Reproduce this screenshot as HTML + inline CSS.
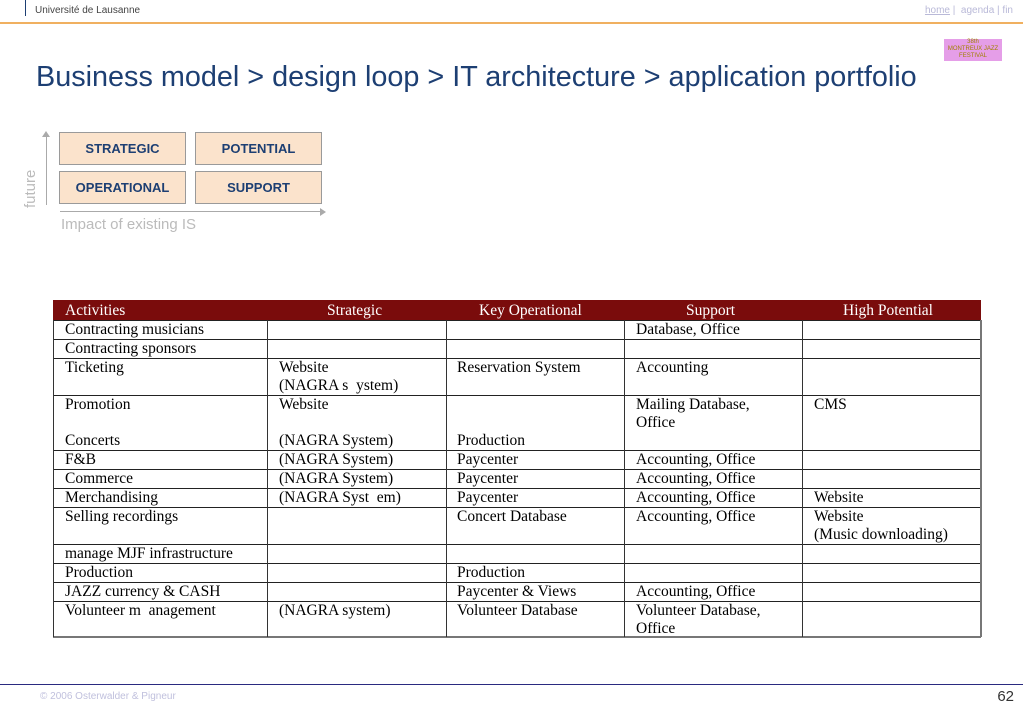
<!DOCTYPE html>
<html><head><meta charset="utf-8"><style>
body{margin:0;width:1023px;height:708px;position:relative;background:#fff;font-family:"Liberation Sans",sans-serif;overflow:hidden}
.a{position:absolute;white-space:nowrap}
.t{position:absolute;font-family:"Liberation Serif",serif;font-size:15.5px;color:#000;white-space:nowrap;line-height:18px}
.h{position:absolute;top:300px;height:20px;background:#7a0c0c}
.hl{position:absolute;height:1px;background:#222;left:53px;width:928px}
.vl{position:absolute;width:1px;background:#333;top:320px;height:317px}
.box{position:absolute;width:125px;height:31px;border:1px solid #9a9a9a;background:#fbe3cc;color:#1d3f73;font-weight:bold;font-size:13px;text-align:center;line-height:31px}
</style></head><body>
<div class="a" style="left:25px;top:0;width:1px;height:16px;background:#1d3f73"></div>
<div class="a" style="left:35px;top:5px;font-size:10px;color:#444">Université de Lausanne</div>
<div class="a" style="right:10px;top:5px;font-size:10px;color:#b9b9d8"><u>home</u> | &nbsp;agenda | fin</div>
<div class="a" style="left:0;top:22px;width:1023px;height:2px;background:#f0b060"></div>
<div class="a" style="left:944px;top:39px;width:58px;height:22px;background:#e59ee8;font-size:6px;color:#a08000;text-align:center;line-height:7px">38th<br>MONTREUX JAZZ<br>FESTIVAL</div>
<div class="a" style="left:36px;top:61px;font-size:28.8px;color:#1d3f73">Business model &gt; design loop &gt; IT architecture &gt; application portfolio</div>

<div class="a" style="left:46px;top:134px;width:1px;height:71px;background:#aaa"></div>
<div class="a" style="left:42px;top:131px;width:0;height:0;border-left:4px solid transparent;border-right:4px solid transparent;border-bottom:6px solid #aaa"></div>
<div class="a" style="left:60px;top:211px;width:262px;height:1px;background:#aaa"></div>
<div class="a" style="left:320px;top:208px;width:0;height:0;border-top:4px solid transparent;border-bottom:4px solid transparent;border-left:6px solid #aaa"></div>
<div class="a" style="left:22px;top:208px;transform:rotate(-90deg);transform-origin:left top;font-size:15px;color:#bbb">future</div>
<div class="a" style="left:61px;top:216px;font-size:15px;color:#bbb">Impact of existing IS</div>
<div class="box" style="left:59px;top:132px">STRATEGIC</div>
<div class="box" style="left:195px;top:132px">POTENTIAL</div>
<div class="box" style="left:59px;top:171px">OPERATIONAL</div>
<div class="box" style="left:195px;top:171px">SUPPORT</div>

<div class="h" style="left:53px;width:928px"></div>
<div class="t" style="left:65px;top:302px;color:#fff">Activities</div>
<div class="t" style="left:327px;top:302px;color:#fff">Strategic</div>
<div class="t" style="left:479px;top:302px;color:#fff">Key Operational</div>
<div class="t" style="left:686px;top:302px;color:#fff">Support</div>
<div class="t" style="left:843px;top:302px;color:#fff">High Potential</div>

<div class="hl" style="top:320px"></div><div class="hl" style="top:339px"></div><div class="hl" style="top:358px"></div><div class="hl" style="top:395px"></div><div class="hl" style="top:450px"></div><div class="hl" style="top:469px"></div><div class="hl" style="top:488px"></div><div class="hl" style="top:507px"></div><div class="hl" style="top:544px"></div><div class="hl" style="top:563px"></div><div class="hl" style="top:582px"></div><div class="hl" style="top:601px"></div><div class="hl" style="top:636px;height:2px;background:#777"></div>
<div class="vl" style="left:53px"></div><div class="vl" style="left:267px"></div><div class="vl" style="left:446px"></div><div class="vl" style="left:624px"></div><div class="vl" style="left:802px"></div><div class="vl" style="left:980px;width:2px;background:#777"></div>

<div class="t" style="left:65px;top:321px">Contracting musicians</div>
<div class="t" style="left:636px;top:321px">Database, Office</div>
<div class="t" style="left:65px;top:340px">Contracting sponsors</div>
<div class="t" style="left:65px;top:359px">Ticketing</div>
<div class="t" style="left:279px;top:359px">Website<br>(NAGRA s&nbsp; ystem)</div>
<div class="t" style="left:457px;top:359px">Reservation System</div>
<div class="t" style="left:636px;top:359px">Accounting</div>
<div class="t" style="left:65px;top:396px">Promotion</div>
<div class="t" style="left:279px;top:396px">Website</div>
<div class="t" style="left:636px;top:396px">Mailing Database,<br>Office</div>
<div class="t" style="left:814px;top:396px">CMS</div>
<div class="t" style="left:65px;top:432px">Concerts</div>
<div class="t" style="left:279px;top:432px">(NAGRA System)</div>
<div class="t" style="left:457px;top:432px">Production</div>
<div class="t" style="left:65px;top:451px">F&amp;B</div>
<div class="t" style="left:279px;top:451px">(NAGRA System)</div>
<div class="t" style="left:457px;top:451px">Paycenter</div>
<div class="t" style="left:636px;top:451px">Accounting, Office</div>
<div class="t" style="left:65px;top:470px">Commerce</div>
<div class="t" style="left:279px;top:470px">(NAGRA System)</div>
<div class="t" style="left:457px;top:470px">Paycenter</div>
<div class="t" style="left:636px;top:470px">Accounting, Office</div>
<div class="t" style="left:65px;top:489px">Merchandising</div>
<div class="t" style="left:279px;top:489px">(NAGRA Syst&nbsp; em)</div>
<div class="t" style="left:457px;top:489px">Paycenter</div>
<div class="t" style="left:636px;top:489px">Accounting, Office</div>
<div class="t" style="left:814px;top:489px">Website</div>
<div class="t" style="left:65px;top:508px">Selling recordings</div>
<div class="t" style="left:457px;top:508px">Concert Database</div>
<div class="t" style="left:636px;top:508px">Accounting, Office</div>
<div class="t" style="left:814px;top:508px">Website<br>(Music downloading)</div>
<div class="t" style="left:65px;top:545px">manage MJF infrastructure</div>
<div class="t" style="left:65px;top:564px">Production</div>
<div class="t" style="left:457px;top:564px">Production</div>
<div class="t" style="left:65px;top:583px">JAZZ currency &amp; CASH</div>
<div class="t" style="left:457px;top:583px">Paycenter &amp; Views</div>
<div class="t" style="left:636px;top:583px">Accounting, Office</div>
<div class="t" style="left:65px;top:602px">Volunteer m&nbsp; anagement</div>
<div class="t" style="left:279px;top:602px">(NAGRA system)</div>
<div class="t" style="left:457px;top:602px">Volunteer Database</div>
<div class="t" style="left:636px;top:602px">Volunteer Database,<br>Office</div>

<div class="a" style="left:0;top:684px;width:1023px;height:1px;background:#2a2a80"></div>
<div class="a" style="left:40px;top:691px;font-size:10px;color:#c0c0dd">© 2006  Osterwalder &amp; Pigneur</div>
<div class="a" style="right:9px;top:688px;font-size:15px;color:#333">62</div>
</body></html>
